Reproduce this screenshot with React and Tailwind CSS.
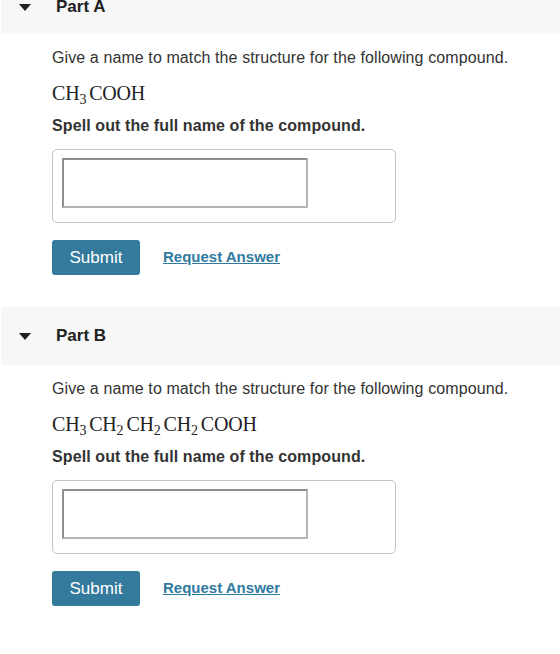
import React from "react";

function Triangle() {
  return (
    <svg width="12" height="7" viewBox="0 0 12 7" className="shrink-0">
      <polygon points="0,0 12,0 6,7" fill="#222" />
    </svg>
  );
}

function Formula({ parts }) {
  return (
    <div className="h-6 leading-6 text-[20px] text-[#222] tracking-[-0.2px]" style={{ fontFamily: '"Liberation Serif", "DejaVu Serif", serif' }}>
      {parts.map((p, i) => (
        <span key={i} className="mr-[3px]">
          {p[0]}
          {p[1] ? <sub className="text-[14px]">{p[1]}</sub> : null}
        </span>
      ))}
    </div>
  );
}

function Part({ label, parts, first }) {
  return (
    <section className={first ? "-mt-[20px]" : "mt-8"}>
      <div className={"ml-px bg-[#f7f7f7] flex items-center pl-[18px] " + (first ? "h-[54px]" : "h-[58px]")}>
        <Triangle />
        <span className="ml-[25px] text-[17px] font-bold text-[#222]">{label}</span>
      </div>
      <div className="pl-[52px]">
        <p className="mt-[14px] h-5 leading-5 text-[16px] tracking-[0.1px] text-[#333]">
          Give a name to match the structure for the following compound.
        </p>
        <div className="mt-[13px]">
          <Formula parts={parts} />
        </div>
        <p className="mt-[11px] h-5 leading-5 text-[16px] tracking-[0.1px] font-bold text-[#333]">
          Spell out the full name of the compound.
        </p>
        <div className="mt-[13px] w-[344px] h-[74px] border border-[#c4c4c4] rounded-[5px] pt-[8px] pl-[9px]">
          <div className="w-[246px] h-[50px] border-2 border-t-[#8f8f8f] border-l-[#8f8f8f] border-r-[#b5b5b5] border-b-[#b5b5b5] bg-white" />
        </div>
        <div className="mt-[17px] flex items-center">
          <button className="w-[88px] h-[35px] rounded-[3px] bg-[#337a9c] text-white text-[17px] font-medium">
            Submit
          </button>
          <a href="#" className="ml-[23px] text-[15px] font-bold text-[#2f7aa0] underline">
            Request Answer
          </a>
        </div>
      </div>
    </section>
  );
}

export default function App() {
  return (
    <div className="w-[560px] h-[654px] bg-white overflow-hidden" style={{ fontFamily: '"Liberation Sans", Arial, sans-serif' }}>
      <Part first label="Part A" parts={[["CH", "3"], ["COOH"]]} />
      <Part label="Part B" parts={[["CH", "3"], ["CH", "2"], ["CH", "2"], ["CH", "2"], ["COOH"]]} />
    </div>
  );
}
